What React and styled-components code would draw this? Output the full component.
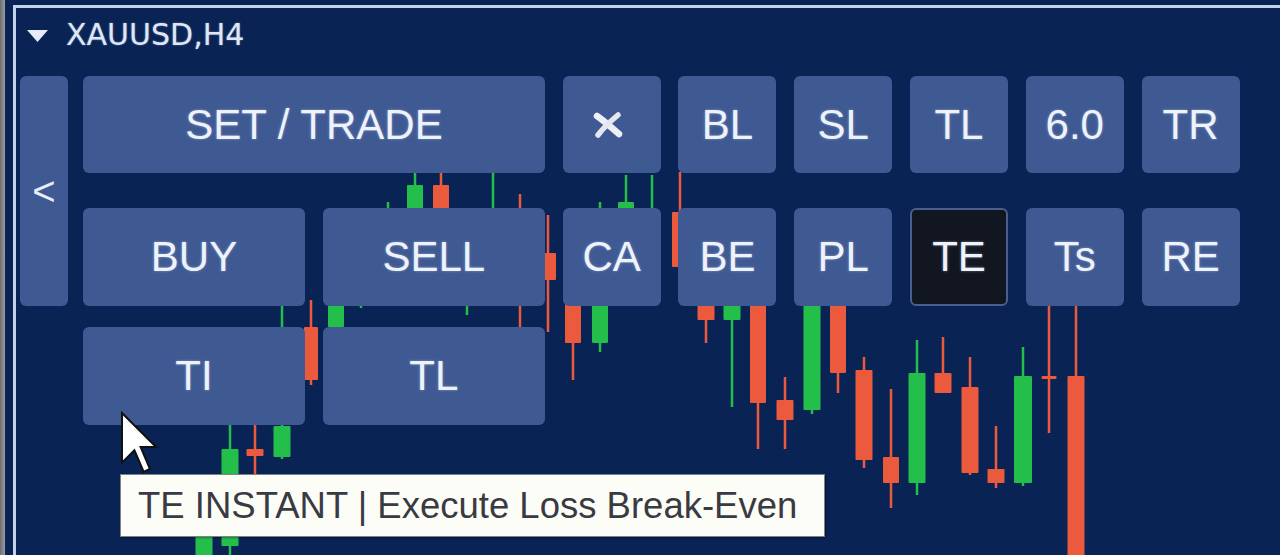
import React from "react";
import styled, { createGlobalStyle } from "styled-components";

const Global = createGlobalStyle`
  html, body { margin: 0; padding: 0; background: #092354; }
  body { font-family: "Liberation Sans", Arial, sans-serif; }
  * { box-sizing: border-box; }
`;

const NAVY = "#092354";
const KEY = "#3f5992";
const GREEN = "#24bf4b";
const RED = "#ec5a3e";

const Root = styled.div`
  position: relative;
  width: 1280px;
  height: 555px;
  overflow: hidden;
  display: flex;
  background: ${NAVY};
`;

const Bezel = styled.div`
  flex: none;
  width: 5px;
  background: linear-gradient(90deg, #6c6d70, #9c9da0);
`;

const ChartArea = styled.section`
  position: relative;
  z-index: 1;
  flex: 1;
  margin: 5px 0 0 8px;
  border-left: 3px solid #c3d2ea;
  border-top: 3px solid #c3d2ea;
  display: flex;
  flex-direction: column;
`;

const ChartCanvas = styled.svg`
  position: absolute;
  left: 0;
  top: 0;
  z-index: 0;
`;

const Header = styled.div`
  display: flex;
  align-items: center;
  gap: 18px;
  padding: 11.5px 0 0 11px;
  height: 41.5px;
`;

const Caret = styled.svg`
  flex: none;
  margin-top: 3px;
`;

const Symbol = styled.span`
  font-family: "DejaVu Sans", sans-serif;
  font-size: 30px;
  line-height: 30px;
  color: #dfe7f4;
  text-shadow: 0 0 2px rgba(190, 210, 255, 0.5);
`;

const Controls = styled.div`
  display: flex;
  align-items: flex-start;
  gap: 15px;
  margin-top: 26.5px;
  padding-left: 4px;
`;

const SideTab = styled.button`
  width: 48px;
  height: 230px;
  border: none;
  border-radius: 6px;
  background: ${KEY};
  color: #e6ecf8;
  font-family: "Liberation Sans", Arial, sans-serif;
  font-size: 40px;
  line-height: 1;
  padding: 0;
  display: flex;
  align-items: center;
  justify-content: center;
`;

const Pad = styled.div`
  display: grid;
  grid-template-columns: repeat(2, 222px) repeat(6, 98px);
  grid-template-rows: 111px 98px 98px;
  column-gap: 17.8px;
  row-gap: 21px;
  align-items: start;
`;

const Key = styled.button`
  grid-column: ${(p) => (p.$span ? `span ${p.$span}` : "auto")};
  height: ${(p) => (p.$short ? "97px" : "98px")};
  border: ${(p) => (p.$active ? "2px solid #4a5f8c" : "none")};
  border-radius: 6px;
  background: ${(p) => (p.$active ? "#111620" : KEY)};
  color: #eef2fb;
  font-family: "Liberation Sans", Arial, sans-serif;
  font-size: 42px;
  line-height: 1;
  padding: 0;
  display: flex;
  align-items: center;
  justify-content: center;
  text-shadow: 0 0 3px rgba(200, 220, 255, 0.45);
`;

const CloseGlyph = styled.svg`
  margin-right: 7px;
  margin-top: 1px;
`;

const Tooltip = styled.div`
  position: absolute;
  z-index: 2;
  left: 120px;
  top: 474px;
  width: 705px;
  height: 63px;
  background: #fdfdf8;
  border: 1px solid #7d8189;
  box-shadow: 1px 1px 2px rgba(0, 0, 0, 0.35);
  display: flex;
  align-items: center;
  padding-left: 17px;
  font-family: "Liberation Sans", Arial, sans-serif;
  font-size: 36.5px;
  color: #3a3a42;
  white-space: nowrap;
`;

const Pointer = styled.svg`
  position: absolute;
  z-index: 3;
  left: 120px;
  top: 411px;
`;

// [x center, bodyTop, bodyBottom, wickTop, wickBottom, up?, bodyWidth]
const candles = [
  [388, 215, 250, 202, 262, true, 16],
  [415, 185, 260, 170, 270, true, 16],
  [441, 185, 260, 170, 270, false, 16],
  [493, 215, 260, 165, 270, true, 16],
  [520, 215, 300, 194, 330, false, 16],
  [548, 253, 280, 215, 332, false, 16],
  [573, 250, 343, 230, 380, false, 16],
  [600, 250, 343, 202, 352, true, 16],
  [626, 202, 290, 175, 295, true, 16],
  [652, 230, 300, 175, 305, true, 16],
  [680, 212, 267, 172, 290, false, 16],
  [706, 260, 320, 250, 343, false, 17],
  [732, 250, 320, 240, 407, true, 17],
  [758, 260, 403, 250, 449, false, 16],
  [785, 400, 420, 377, 449, false, 17],
  [812, 250, 410, 240, 414, true, 17],
  [838, 250, 373, 240, 393, false, 16],
  [864, 370, 460, 357, 468, false, 17],
  [891, 457, 483, 389, 508, false, 16],
  [917, 373, 483, 340, 495, true, 17],
  [943, 373, 393, 337, 393, false, 17],
  [970, 387, 473, 357, 475, false, 17],
  [996, 469, 483, 426, 488, false, 17],
  [1023, 376, 483, 347, 486, true, 18],
  [1049, 376, 379, 280, 433, false, 15],
  [1076, 376, 600, 280, 600, false, 17],
  [282, 426, 457, 300, 459, true, 17],
  [311, 327, 380, 300, 385, false, 14],
  [336, 280, 327, 270, 335, true, 16],
  [361, 250, 295, 240, 308, true, 16],
  [467, 250, 290, 240, 315, true, 16],
  [230, 449, 546, 400, 555, true, 17],
  [255, 449, 456, 400, 474, false, 17],
  [204, 520, 570, 500, 570, true, 17],
];

function Chart() {
  return (
    <ChartCanvas width="1280" height="555" viewBox="0 0 1280 555">
      {candles.map(([x, bt, bb, wt, wb, up, w], i) => {
        const c = up ? GREEN : RED;
        return (
          <g key={i} fill={c}>
            <rect x={x - 1.25} y={wt} width="2.5" height={wb - wt} />
            <rect x={x - w / 2} y={bt} width={w} height={Math.max(bb - bt, 3)} rx="1" />
          </g>
        );
      })}
    </ChartCanvas>
  );
}

const row1 = ["BL", "SL", "TL", "6.0", "TR"];
const row2 = ["BE", "PL", "TE", "Ts", "RE"];

export default function App() {
  return (
    <>
      <Global />
      <Root>
        <Chart />
        <Bezel />
        <ChartArea>
          <Header>
            <Caret width="21" height="12" viewBox="0 0 21 12">
              <polygon points="0,0 21,0 10.5,12" fill="#e6ecf7" />
            </Caret>
            <Symbol>XAUUSD,H4</Symbol>
          </Header>
          <Controls>
            <SideTab>&lt;</SideTab>
            <Pad>
              <Key $span={2} $short>SET / TRADE</Key>
              <Key $short aria-label="close">
                <CloseGlyph width="32" height="28" viewBox="0 0 32 28">
                  <path d="M5 5 C11 9, 19 16, 27 23" stroke="#eef0f6" strokeWidth="6.5" strokeLinecap="round" fill="none" />
                  <path d="M26 4 C20 9, 12 16, 6 24" stroke="#e4e7ef" strokeWidth="5.5" strokeLinecap="round" fill="none" />
                </CloseGlyph>
              </Key>
              {row1.map((t) => (
                <Key key={"a" + t} $short>{t}</Key>
              ))}
              <Key>BUY</Key>
              <Key>SELL</Key>
              <Key>CA</Key>
              {row2.map((t) => (
                <Key key={"b" + t} $active={t === "TE"}>{t}</Key>
              ))}
              <Key>TI</Key>
              <Key>TL</Key>
            </Pad>
          </Controls>
        </ChartArea>
        <Pointer width="40" height="66" viewBox="0 0 40 66">
          <polygon
            points="2,2 2,51.6 14.4,39.2 23.7,60.9 29.9,57.8 20.6,36.1 36.1,36.1"
            fill="#ffffff"
            stroke="#111111"
            strokeWidth="2"
            strokeLinejoin="miter"
          />
        </Pointer>
        <Tooltip>TE INSTANT | Execute Loss Break-Even</Tooltip>
      </Root>
    </>
  );
}
